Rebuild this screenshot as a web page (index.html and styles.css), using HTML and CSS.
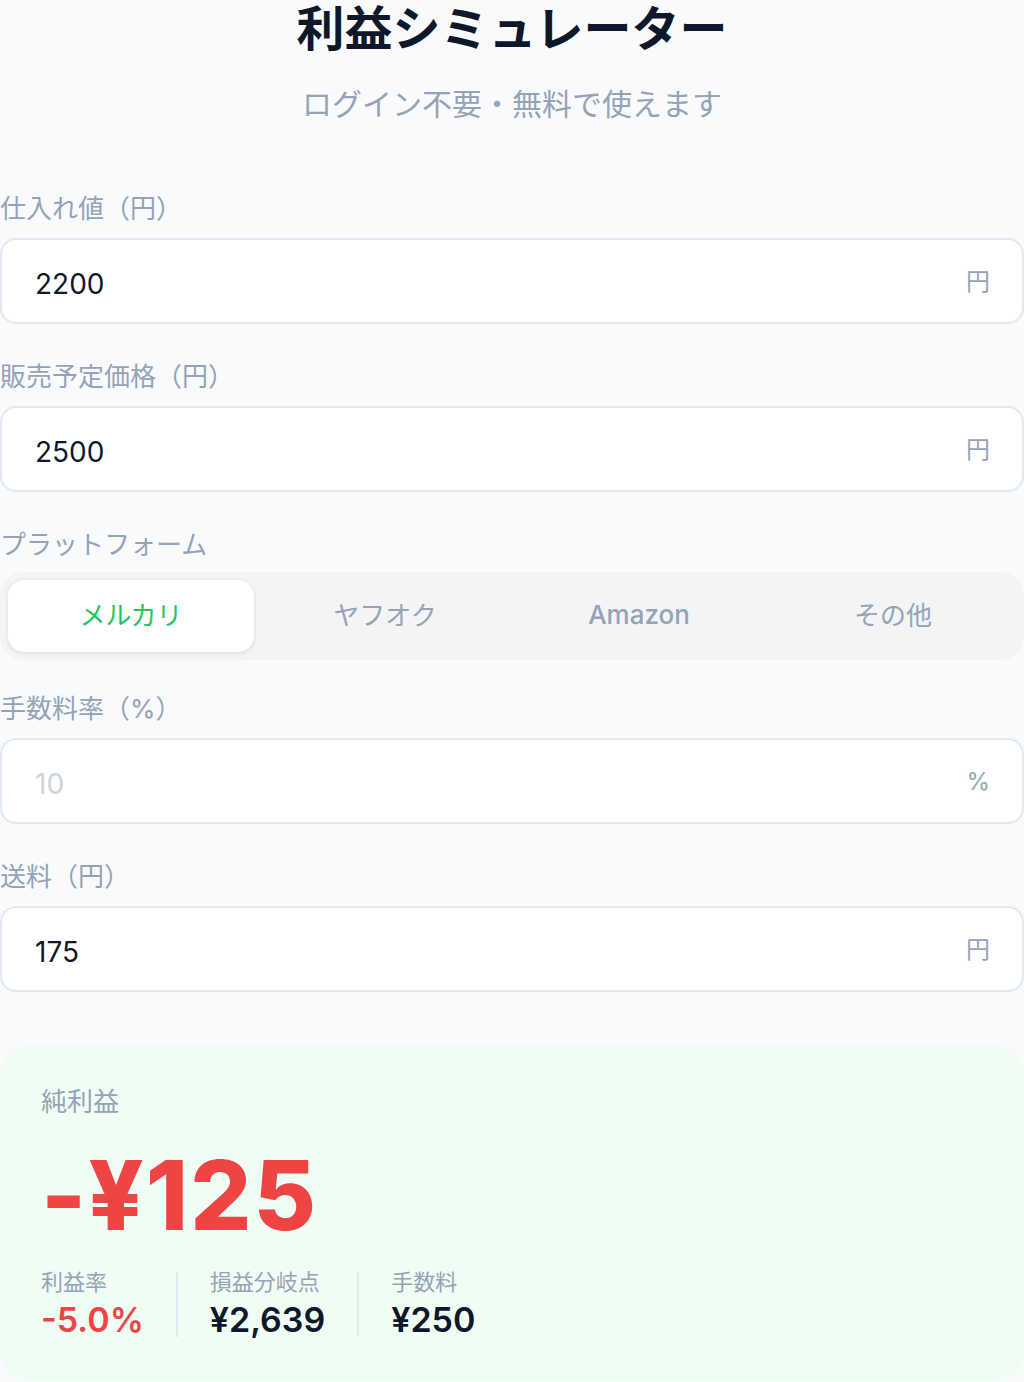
FILE: index.html
```html
<!DOCTYPE html>
<html lang="ja">
<head>
<meta charset="utf-8">
<title>利益シミュレーター</title>
<link rel="stylesheet" href="styles.css">
</head>
<body>
<main class="page">
  <header class="header">
    <h1 class="title">利益シミュレーター</h1>
    <p class="subtitle">ログイン不要・無料で使えます</p>
  </header>

  <section class="form">
    <div class="field">
      <label class="label">仕入れ値（円）</label>
      <div class="input-box">
        <input class="input" type="text" value="2200">
        <span class="suffix">円</span>
      </div>
    </div>

    <div class="field">
      <label class="label">販売予定価格（円）</label>
      <div class="input-box">
        <input class="input" type="text" value="2500">
        <span class="suffix">円</span>
      </div>
    </div>

    <div class="field field-seg">
      <label class="label label-seg">プラットフォーム</label>
      <div class="segment">
        <button class="tab tab-active">メルカリ</button>
        <button class="tab">ヤフオク</button>
        <button class="tab tab-latin">Amazon</button>
        <button class="tab">その他</button>
      </div>
    </div>

    <div class="field">
      <label class="label">手数料率（%）</label>
      <div class="input-box">
        <input class="input" type="text" placeholder="10">
        <span class="suffix suffix-pct">%</span>
      </div>
    </div>

    <div class="field">
      <label class="label">送料（円）</label>
      <div class="input-box">
        <input class="input" type="text" value="175">
        <span class="suffix">円</span>
      </div>
    </div>
  </section>

  <section class="result">
    <div class="result-label">純利益</div>
    <div class="result-value">-¥125</div>
    <div class="stats">
      <div class="stat">
        <div class="stat-label">利益率</div>
        <div class="stat-value stat-neg">-5.0%</div>
      </div>
      <div class="divider"></div>
      <div class="stat">
        <div class="stat-label">損益分岐点</div>
        <div class="stat-value">¥2,639</div>
      </div>
      <div class="divider"></div>
      <div class="stat">
        <div class="stat-label">手数料</div>
        <div class="stat-value">¥250</div>
      </div>
    </div>
  </section>
</main>
</body>
</html>
```

FILE: styles.css
```css
* {
  box-sizing: border-box;
}

html, body {
  margin: 0;
  padding: 0;
  background: #f8fafc;
}

body {
  font-family: "Inter", "Noto Sans CJK JP", "Noto Sans", sans-serif;
  color: #0f172a;
}

.page {
  width: 1024px;
  display: flex;
  flex-direction: column;
}

.header {
  display: flex;
  flex-direction: column;
  align-items: center;
}

.title {
  margin: 0;
  font-size: 48px;
  line-height: 58px;
  font-weight: 700;
  color: #0f172a;
  letter-spacing: 0;
}

.subtitle {
  margin: 24px 0 0;
  font-size: 30px;
  line-height: 44px;
  color: #94a3b8;
  font-weight: 400;
}

.form {
  margin-top: 62px;
  display: flex;
  flex-direction: column;
}

.field {
  display: flex;
  flex-direction: column;
  margin-bottom: 32px;
}

.field-seg {
  margin-bottom: 28px;
}

.label {
  font-size: 26px;
  line-height: 40px;
  padding-top: 1px;
  height: 40px;
  color: #94a3b8;
  margin-bottom: 10px;
}

.label-seg {
  margin-bottom: 8px;
}

.input-box {
  height: 86px;
  background: #ffffff;
  border: 2px solid #e2e8f0;
  border-radius: 16px;
  display: flex;
  align-items: center;
  padding: 0 32px 0 33px;
}

.input {
  flex: 1;
  min-width: 0;
  border: none;
  outline: none;
  background: transparent;
  padding: 5px 0 0;
  font-family: "Inter", "Noto Sans CJK JP", sans-serif;
  font-size: 28px;
  color: #0f172a;
}

.input::placeholder {
  color: #cbd5e1;
}

.suffix {
  font-size: 24px;
  color: #94a3b8;
  font-family: "Noto Sans CJK JP", sans-serif;
  padding-bottom: 3px;
}

.suffix-pct {
  font-family: "Inter", sans-serif;
  font-size: 24px;
  padding-bottom: 0;
}

.segment {
  height: 88px;
  background: #f3f4f6;
  border-radius: 24px;
  padding: 8px;
  display: grid;
  grid-template-columns: repeat(4, 1fr);
  gap: 8px;
}

.tab {
  border: none;
  background: transparent;
  border-radius: 16px;
  font-family: "Noto Sans CJK JP", sans-serif;
  font-size: 26px;
  color: #94a3b8;
  padding: 0 0 5px;
  cursor: pointer;
}

.tab-latin {
  font-family: "Inter", sans-serif;
  font-weight: 500;
  padding-bottom: 3px;
}

.tab-active {
  background: #ffffff;
  color: #22c55e;
  box-shadow: 0 1px 4px rgba(15, 23, 42, 0.12);
}

.result {
  margin-top: 20px;
  background: #f0fdf4;
  border-radius: 32px;
  padding: 36px 41px 40px;
  display: flex;
  flex-direction: column;
}

.result-label {
  font-family: "Noto Sans CJK JP", sans-serif;
  font-size: 26px;
  line-height: 40px;
  color: #94a3b8;
}

.result-value {
  margin-top: 27px;
  font-size: 96px;
  line-height: 96px;
  font-weight: 800;
  color: #ef4444;
  letter-spacing: 2px;
}

.stats {
  margin-top: 22px;
  display: flex;
  gap: 32px;
}

.stat {
  display: flex;
  flex-direction: column;
}

.stat-label {
  font-family: "Noto Sans CJK JP", sans-serif;
  font-size: 22px;
  line-height: 30px;
  color: #94a3b8;
}

.stat-value {
  margin-top: 4px;
  font-size: 34px;
  line-height: 42px;
  font-weight: 600;
  color: #0f172a;
}

.stat-neg {
  color: #ef4444;
}

.divider {
  width: 2px;
  background: #e2e8f0;
  margin: 7px 0 4px;
}
```
